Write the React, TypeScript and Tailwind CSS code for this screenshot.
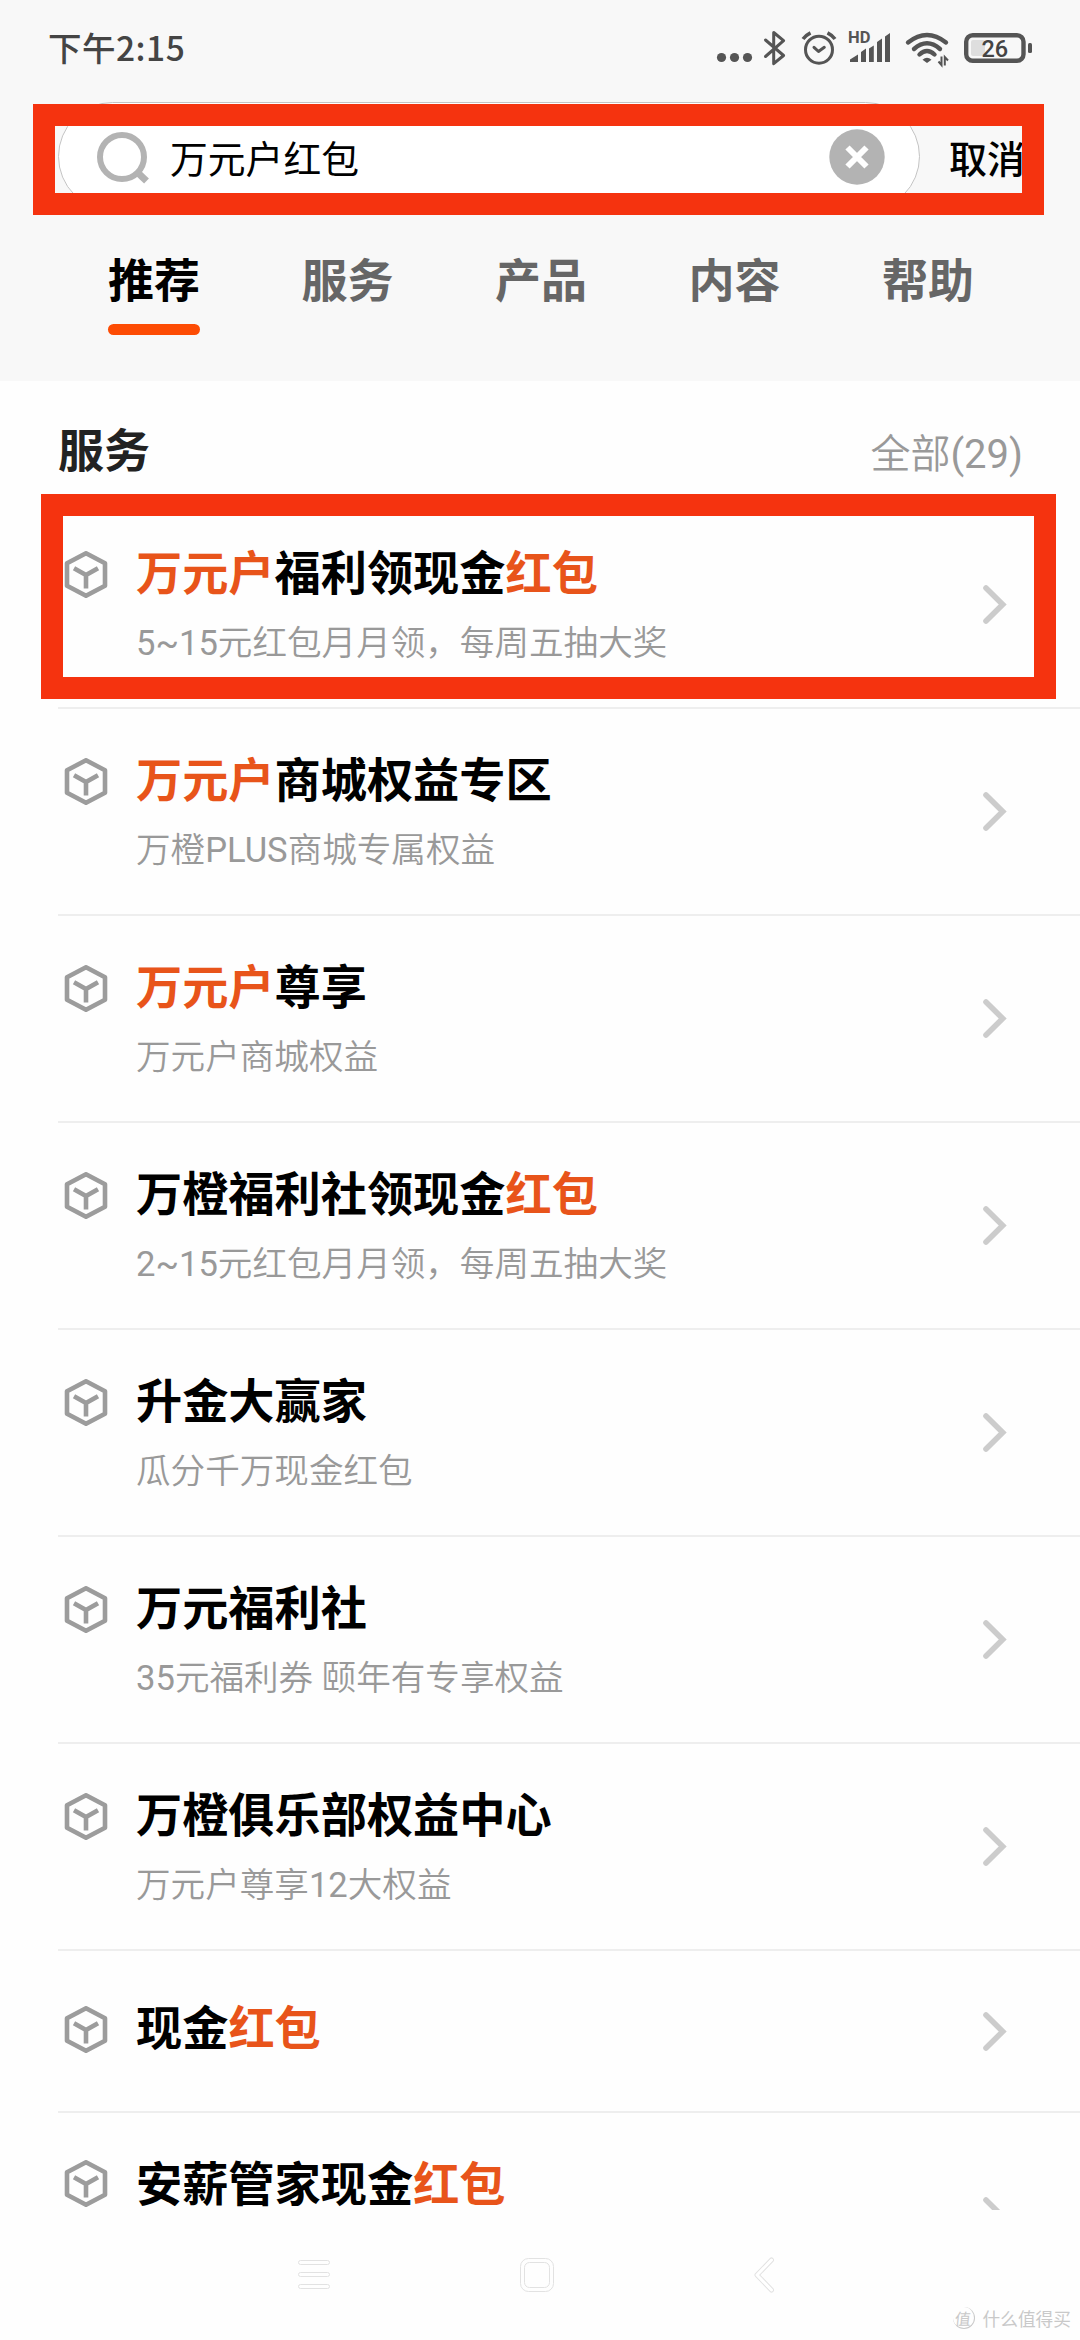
type Part = { text: string; hot?: boolean };

type Service = {
  title: Part[];
  subtitle?: string;
};

const tabs = ["推荐", "服务", "产品", "内容", "帮助"];

const services: Service[] = [
  {
    title: [{ text: "万元户", hot: true }, { text: "福利领现金" }, { text: "红包", hot: true }],
    subtitle: "5~15元红包月月领，每周五抽大奖",
  },
  {
    title: [{ text: "万元户", hot: true }, { text: "商城权益专区" }],
    subtitle: "万橙PLUS商城专属权益",
  },
  {
    title: [{ text: "万元户", hot: true }, { text: "尊享" }],
    subtitle: "万元户商城权益",
  },
  {
    title: [{ text: "万橙福利社领现金" }, { text: "红包", hot: true }],
    subtitle: "2~15元红包月月领，每周五抽大奖",
  },
  { title: [{ text: "升金大赢家" }], subtitle: "瓜分千万现金红包" },
  { title: [{ text: "万元福利社" }], subtitle: "35元福利券 颐年有专享权益" },
  { title: [{ text: "万橙俱乐部权益中心" }], subtitle: "万元户尊享12大权益" },
  { title: [{ text: "现金" }, { text: "红包", hot: true }] },
];

const lastTitle: Part[] = [{ text: "安薪管家现金" }, { text: "红包", hot: true }];

function StatusIcons() {
  return (
    <svg className="h-[60px] w-[340px]" viewBox="710 20 340 60" fill="none" stroke="#555" aria-hidden>
      <g fill="#555" stroke="none">
        <circle cx="721.5" cy="57.5" r="4.6" />
        <circle cx="734.5" cy="57.5" r="4.6" />
        <circle cx="747.5" cy="57.5" r="4.6" />
      </g>
      <path d="M765.5 40 L783.6 55.5 L773.7 63.700 V32.500 L783.6 40.700 L765.5 56.500" strokeWidth="3" strokeLinejoin="round" strokeLinecap="round" />
      <circle cx="819" cy="49.700" r="13.500" strokeWidth="3" />
      <path d="M814 47.300 L818.500 51.500 L824.300 47.300" strokeWidth="3" strokeLinecap="round" strokeLinejoin="round" />
      <path d="M803 39 Q806 35 810.500 32.800 M835 39 Q832 35 827.500 32.800" strokeWidth="3.600" />
      <g fill="#555" stroke="none">
        <text x="848" y="43" className="font-['Roboto',sans-serif] text-[16.500px] font-bold">HD</text>
        <path d="M850 62 V59.500 L858 54.500 V62Z M861 62 V52 L866 48.500 V62Z M869 62 V48.500 L873.800 45.500 V62Z M877 62 V42 L882 38.500 V62Z M885 62 V36.500 L890 33 V62Z" />
        <path d="M927 63 L922.500 59.800 Q927 55.500 931.500 59.800Z" />
      </g>
      <path d="M908 42.500 Q927 27.500 946 42.500 M914 49 Q927 37.500 940 49 M919.500 54.500 Q927 47.500 934.500 54.500" strokeWidth="4.400" strokeLinecap="round" />
      <path d="M941.500 56.500 V65 L938.500 61.500 M944.800 65.500 V57 L948 60.500" strokeWidth="2" />
      <rect x="966.200" y="35.200" width="57.300" height="25.600" rx="6.500" strokeWidth="4.400" />
      <rect x="971" y="40" width="14" height="16" rx="2" fill="#dedede" stroke="none" />
      <rect x="1028" y="43" width="4" height="10" rx="1.500" fill="#555" stroke="none" />
      <text x="981.500" y="56.700" fill="#444" stroke="none" className="font-['Roboto',sans-serif] text-[23.500px] font-medium">26</text>
    </svg>
  );
}

function CubeIcon() {
  return (
    <svg className="h-[47px] w-[44px]" viewBox="0 0 44 47" fill="none" stroke="#9c9c9c" strokeWidth="4.600" strokeLinejoin="round" aria-hidden>
      <path d="M22 2.300 L41 12.300 V34.700 L22 44.700 L3 34.700 V12.300Z" />
      <path d="M10 17.200 L22 24 L34 17.200 M22 24 V37.500" />
    </svg>
  );
}

function Chevron() {
  return (
    <svg className="h-[39px] w-6" viewBox="0 0 24 39" fill="none" stroke="#ccc" strokeWidth="5.600" strokeLinecap="round" aria-hidden>
      <path d="M3 3 L19.700 19.500 L3 36" />
    </svg>
  );
}

function SearchBar() {
  return (
    <div className="relative mt-[22px] flex h-[109px] items-center pl-[58px]">
      <div className="flex h-[109px] w-[862px] items-center rounded-full border border-[#c4c4c4] bg-white pl-[38px] pr-[34px]">
        <svg className="h-14 w-14" viewBox="0 0 56 56" fill="none" stroke="#b3b3b3" strokeWidth="6" aria-hidden>
          <circle cx="25" cy="28" r="22" />
          <path d="M40 43 L49.500 52" strokeWidth="7" />
        </svg>
        <span className="ml-[17px] flex-1 text-[37.800px] leading-none text-black">万元户红包</span>
        <svg className="h-14 w-14" viewBox="0 0 56 56" aria-hidden>
          <circle cx="28" cy="28" r="27.700" fill="#b3b3b3" />
          <path d="M18.500 18.500 L37.500 37.500 M37.500 18.500 L18.500 37.500" stroke="#fff" strokeWidth="6" />
        </svg>
      </div>
      <span className="ml-[29px] text-[38px] font-medium leading-none text-black">取消</span>
      {/* marker frame drawn over the field */}
      <div className="absolute left-[33px] top-[2px] h-[111px] w-[1011px] border-[22px] border-[#f5330f]" />
    </div>
  );
}

function Tabs() {
  return (
    <nav className="mt-10 flex justify-between pl-[108px] pr-[106px]">
      {tabs.map((tab, i) => (
        <div key={tab} className="flex flex-col items-center">
          <span className={i === 0 ? "text-[46px] font-bold leading-[52px] text-black" : "text-[46px] font-bold leading-[52px] text-[#666]"}>
            {tab}
          </span>
          {i === 0 && <div className="mt-[21px] h-[11px] w-[92px] rounded-full bg-[#fd4c04]" />}
        </div>
      ))}
    </nav>
  );
}

function Title({ parts }: { parts: Part[] }) {
  return (
    <h3 className="text-[46.200px] font-bold leading-[52px] text-black">
      {parts.map((part) => (
        <span key={part.text} className={part.hot ? "text-[#e8541a]" : undefined}>
          {part.text}
        </span>
      ))}
    </h3>
  );
}

// Latin letters and digits take the regular weight, Chinese a slightly lighter one
function MixedText({ text }: { text: string }) {
  return (
    <>
      {text.split(/([\w~()]+)/).map((run, i) => (
        <span key={i} className={i % 2 ? "font-normal" : "font-[350]"}>
          {run}
        </span>
      ))}
    </>
  );
}

function ServiceRow({ title, subtitle }: Service) {
  return (
    <li
      className={`ml-[58px] flex items-center border-b-2 border-[#eee] pr-[73px] ${
        subtitle ? "h-[207px]" : "h-[162px]"
      }`}
    >
      <div className={subtitle ? "h-full w-[78px] pl-[6px] pt-[49px]" : "w-[78px] pb-[3px] pl-[6px]"}>
        <CubeIcon />
      </div>
      <div className={subtitle ? "h-full flex-1 pt-[42px]" : "flex-1 pb-3"}>
        <Title parts={title} />
        {subtitle && (
          <p className="mt-[25px] font-['Roboto','Noto_Sans_CJK_SC',sans-serif] text-[34.600px] leading-[44px] text-[#999]">
            <MixedText text={subtitle} />
          </p>
        )}
      </div>
      <Chevron />
    </li>
  );
}

function SystemNav() {
  return (
    <svg className="h-[130px] w-[1080px]" viewBox="0 2210 1080 130" fill="none" stroke="#e2e2e2" aria-hidden>
      <rect x="298.500" y="2260.500" width="31" height="4" rx="2" />
      <rect x="298.500" y="2272.500" width="31" height="4" rx="2" />
      <rect x="298.500" y="2284.500" width="31" height="4" rx="2" />
      <rect x="520.500" y="2258.500" width="33" height="33" rx="8" />
      <rect x="524.500" y="2262.500" width="25" height="25" rx="5" />
      <path d="M771.500 2260 L757 2275 L771.500 2290" strokeWidth="5" strokeLinecap="round" strokeLinejoin="round" />
      <path d="M771.500 2260 L757 2275 L771.500 2290" stroke="#fff" strokeWidth="3" strokeLinecap="round" strokeLinejoin="round" />
    </svg>
  );
}

function Watermark() {
  return (
    <div className="absolute bottom-[10px] right-[9px] flex items-center gap-2 text-[17.700px] leading-6 text-[#c9c9c9]">
      <span className="flex size-[22px] items-center justify-center rounded-full border-b border-r border-[#c9c9c9] text-[16px]">
        <span className="-skew-x-6">值</span>
      </span>
      <span>什么值得买</span>
    </div>
  );
}

export default function App() {
  return (
    <div className="relative flex h-[2340px] w-[1080px] flex-col overflow-hidden bg-[#fefefe] font-['Noto_Sans_CJK_SC',sans-serif]">
      <header className="h-[381px] shrink-0 bg-[#f8f8f8]">
        <div className="flex h-20 items-end justify-between pl-12 pr-[30px]">
          <span className="mb-[13px] text-[33.500px] font-medium leading-[40px] tracking-[0.5px] text-[#444]">下午2:15</span>
          <StatusIcons />
        </div>
        <SearchBar />
        <Tabs />
      </header>
      <main className="h-[1829px] shrink-0">
        <div className="flex h-[121px] items-center justify-between pl-[58px] pr-[57px]">
          <h2 className="mt-[10px] text-[46px] font-bold leading-[52px] text-[#222]">服务</h2>
          <span className="mt-[26px] font-['Roboto','Noto_Sans_CJK_SC',sans-serif] text-[40px] text-[#999]">
            <MixedText text="全部(29)" />
          </span>
        </div>
        <div className="relative">
          <ul>
            {services.map((service, i) => (
              <ServiceRow key={i} {...service} />
            ))}
            {/* last row is cut by the system bar, its chevron only peeks out */}
            <li className="ml-[58px] flex h-[97px] items-start pr-[73px]">
              <div className="w-[78px] pl-[6px] pt-[47px]">
                <CubeIcon />
              </div>
              <div className="flex-1 pt-[42px]">
                <Title parts={lastTitle} />
              </div>
              <div className="mt-[84px] h-[13px] overflow-hidden">
                <Chevron />
              </div>
            </li>
          </ul>
          {/* marker frame around the first result */}
          <div className="absolute left-[41px] top-[-8px] h-[205px] w-[1015px] border-[22px] border-[#f5330f]" />
        </div>
      </main>
      <SystemNav />
      <Watermark />
    </div>
  );
}
